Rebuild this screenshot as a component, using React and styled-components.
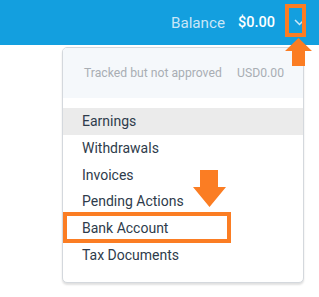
import styled, { createGlobalStyle } from 'styled-components';

const Global = createGlobalStyle`
    body {
        margin: 0;
        background: #fff;
        font-family: Roboto, "Liberation Sans", sans-serif;
    }
`;

const Page = styled.div`
    position: relative;
    width: 319px;
    height: 297px;
    overflow: hidden;
`;

const TopBar = styled.header`
    height: 45px;
    background-color: #139fdf;
    display: flex;
    justify-content: flex-end;
    align-items: center;
    padding-right: 14px;
    font-size: 14.5px;
`;

const BalanceLabel = styled.span`
    color: #c9e6f7;
    font-size: 15.2px;
    margin-right: 13px;
`;

const BalanceValue = styled.span`
    color: #fff;
    font-weight: 500;
    margin-right: 18px;
`;

const Toggle = styled.span`
    display: flex;
    width: 12px;
    justify-content: center;
`;

const Menu = styled.div`
    margin: 2px 0 0 62px;
    width: 240px;
    border: 1px solid #d4d8dd;
    border-radius: 5px;
    box-shadow: 0 2px 2px rgba(0, 0, 0, 0.12);
    background: #fff;
    overflow: hidden;
    padding-bottom: 14px;
`;

const Summary = styled.div`
    background: #f5f8fb;
    height: 50px;
    display: flex;
    align-items: center;
    justify-content: space-between;
    padding: 0 19px 0 21px;
    font-size: 12.2px;
    color: #a9aeb4;
    margin-bottom: 10px;
`;

const Item = styled.div`
    height: 26.7px;
    display: flex;
    align-items: center;
    padding-left: 19px;
    font-size: 14px;
    color: #2e3b4b;
    background: ${({ active }) => (active ? '#ebebeb' : 'transparent')};
`;

const Frame = styled.div`
    position: absolute;
    border: 4px solid #fb7d23;
    box-sizing: border-box;
`;

const Arrow = styled.svg`
    position: absolute;
`;

const items = ['Earnings', 'Withdrawals', 'Invoices', 'Pending Actions', 'Bank Account', 'Tax Documents'];

export default function App() {
    return (
        <Page>
            <Global />
            <TopBar>
                <BalanceLabel>Balance</BalanceLabel>
                <BalanceValue>$0.00</BalanceValue>
                <Toggle>
                    <svg width="11" height="7" viewBox="0 0 11 7">
                        <path d="M1 1l4.5 4.5L10 1" fill="none" stroke="#cde8f8" strokeWidth="1.5" />
                    </svg>
                </Toggle>
            </TopBar>
            <Menu>
                <Summary>
                    <span>Tracked but not approved</span>
                    <span>USD0.00</span>
                </Summary>
                {items.map((label, i) => (
                    <Item key={label} active={i === 0}>{label}</Item>
                ))}
            </Menu>

            <Frame style={{ left: 285, top: 4, width: 21, height: 33 }} />
            <Arrow style={{ left: 285, top: 38 }} width="27" height="28" viewBox="0 0 27 28">
                <path d="M13.5 0L27 13H20V28H7V13H0Z" fill="#fb7d23" />
            </Arrow>

            <Frame style={{ left: 63, top: 212, width: 168, height: 31 }} />
            <Arrow style={{ left: 193, top: 170 }} width="33" height="38" viewBox="0 0 33 38">
                <path d="M7 0H25V17H33L16.5 37L0 17H7Z" fill="#fb7d23" />
            </Arrow>
        </Page>
    );
}
